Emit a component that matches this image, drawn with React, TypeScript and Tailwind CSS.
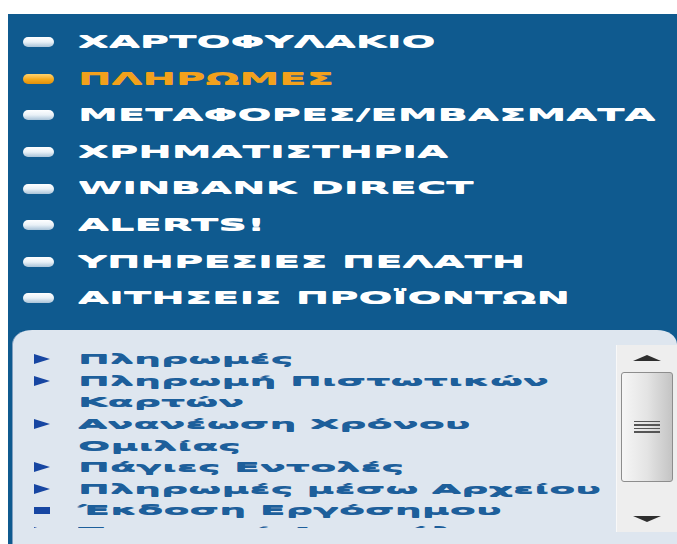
import React from 'react';

const mainMenu = [
  { label: 'ΧΑΡΤΟΦΥΛΑΚΙΟ' },
  { label: 'ΠΛΗΡΩΜΕΣ', active: true },
  { label: 'ΜΕΤΑΦΟΡΕΣ/ΕΜΒΑΣΜΑΤΑ' },
  { label: 'ΧΡΗΜΑΤΙΣΤΗΡΙΑ' },
  { label: 'WINBANK DIRECT' },
  { label: 'ALERTS!' },
  { label: 'ΥΠΗΡΕΣΙΕΣ ΠΕΛΑΤΗ' },
  { label: 'ΑΙΤΗΣΕΙΣ ΠΡΟΪΟΝΤΩΝ' },
];

const subMenu = [
  { lines: ['Πληρωμές'] },
  { lines: ['Πληρωμή Πιστωτικών', 'Καρτών'] },
  { lines: ['Ανανέωση Χρόνου', 'Ομιλίας'] },
  { lines: ['Πάγιες Εντολές'] },
  { lines: ['Πληρωμές μέσω Αρχείου'] },
  { lines: ['Έκδοση Εργόσημου'], current: true },
  { lines: ['Ταμειακή Διευκόλυνση'] },
];

function Dot({ active }: { active?: boolean }) {
  return (
    <span
      className={
        'block w-[31px] h-[10px] rounded-full shrink-0 ' +
        (active
          ? 'bg-gradient-to-b from-[#ffd36a] via-[#f7ad1e] to-[#e08f0a]'
          : 'bg-gradient-to-b from-[#ffffff] via-[#e9f1f7] to-[#a9c3d8]')
      }
    />
  );
}

function Arrow() {
  return (
    <svg width="16" height="10" viewBox="0 0 16 10" preserveAspectRatio="none" className="shrink-0">
      <polygon points="0,0 16,5 0,10" fill="#1746a2" />
    </svg>
  );
}

function Scrollbar() {
  return (
    <div className="mt-[15px] h-[187px] w-[61px] shrink-0 flex flex-col bg-[#eeeeee] border-l border-[#f8f8f8]">
      <div className="h-[27px] flex items-center justify-center">
        <svg width="28" height="6" viewBox="0 0 28 6" preserveAspectRatio="none">
          <polygon points="0,6 14,0 28,6" fill="#2e2e2e" />
        </svg>
      </div>
      <div className="mx-[4px] h-[110px] rounded-[3px] border border-[#8d8d8d] bg-gradient-to-r from-[#f6f6f6] via-[#e4e4e4] to-[#c4c4c4] flex items-center justify-center">
        <div className="flex flex-col gap-[2px] w-[26px]">
          <span className="block h-[1.5px] bg-[#555555]" />
          <span className="block h-[1.5px] bg-[#555555]" />
          <span className="block h-[1.5px] bg-[#555555]" />
          <span className="block h-[1.5px] bg-[#555555]" />
        </div>
      </div>
      <div className="flex-1 flex items-end justify-center pb-[10px]">
        <svg width="28" height="6" viewBox="0 0 28 6" preserveAspectRatio="none">
          <polygon points="0,0 14,6 28,0" fill="#2e2e2e" />
        </svg>
      </div>
    </div>
  );
}

export default function App() {
  return (
    <div className="w-[677px] h-[544px] bg-white overflow-hidden pt-[14px] pl-[8px] font-['DejaVu_Sans',Verdana,sans-serif] font-bold">
      <div className="h-[530px] bg-[#0f5a8f] flex flex-col">
        <ul className="pt-[10px]">
          {mainMenu.map(item => (
            <li key={item.label} className="h-[36.6px] flex items-center pl-[15px]">
              <Dot active={item.active} />
              <span
                className={
                  'ml-[24px] inline-block origin-left scale-x-[2.67] text-[15px] whitespace-nowrap [text-shadow:0_0.7px_0_currentColor] ' +
                  (item.active ? 'text-[#f2a11c]' : 'text-white')
                }
              >
                {item.label}
              </span>
            </li>
          ))}
        </ul>

        <div className="mt-[13px] ml-[4px] flex-1 flex bg-[#dee6ef] rounded-tl-[20px_14px] rounded-tr-[20px_14px] border-l border-[#7f9fc0]">
          <ul className="mt-[18.5px] h-[180px] flex-1 overflow-hidden">
            {subMenu.map(item => (
              <li key={item.lines[0]} className="flex items-start pl-[21px] leading-[21.6px]">
                <span className="h-[21.6px] w-[16px] flex items-center shrink-0">
                  {item.current ? <span className="block w-[16px] h-[7px] bg-[#1746a2]" /> : <Arrow />}
                </span>
                <span className="ml-[28px] inline-block origin-left scale-x-[2.93] text-[13px] text-[#1d5f9b] whitespace-nowrap [text-shadow:0_0.6px_0_currentColor]">
                  {item.lines.map((l, i) => (
                    <span key={i} className="block">{l}</span>
                  ))}
                </span>
              </li>
            ))}
          </ul>
          <Scrollbar />
        </div>
      </div>
    </div>
  );
}
